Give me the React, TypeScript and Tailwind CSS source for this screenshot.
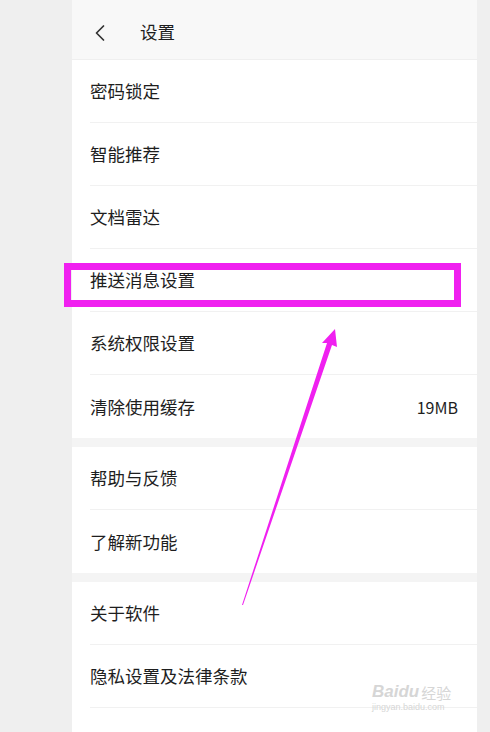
import { ChevronLeft } from "lucide-react";

type Row = { label: string; value?: string };

const groups: Row[][] = [
  [
    { label: "密码锁定" },
    { label: "智能推荐" },
    { label: "文档雷达" },
    { label: "推送消息设置" },
    { label: "系统权限设置" },
    { label: "清除使用缓存", value: "19MB" },
  ],
  [{ label: "帮助与反馈" }, { label: "了解新功能" }],
  [{ label: "关于软件" }, { label: "隐私设置及法律条款" }, { label: "" }],
];

const font = { fontFamily: '"Noto Sans CJK SC", "Noto Sans", sans-serif' };

const App = () => {
  return (
    <div className="relative w-[490px] h-[732px] overflow-hidden bg-[#efefef] flex items-start" style={font}>
      <div className="ml-[72px] w-[405px] flex flex-col bg-[#f4f4f4]">
        {/* header */}
        <div className="shrink-0 h-[60px] bg-[#f8f8f8] flex items-center pt-[6px] border-b border-[#efefef]">
          <ChevronLeft className="ml-[14px] w-[28px] h-[28px] text-[#333]" strokeWidth={1.5} />
          <span className="ml-[26px] text-[17.5px] text-[#1e1e1e]">设置</span>
        </div>

        {groups.map((g, gi) => (
          <div key={gi} className={gi > 0 ? "shrink-0 mt-[9px] bg-white" : "shrink-0 bg-white"}>
            {g.map((r, ri) => (
              <div key={ri} className="pl-[18px]">
                <div
                  className={
                    ri < g.length - 1
                      ? "h-[63px] flex items-center justify-between pr-[19px] pt-[1px] border-b border-[#f1f1f1]"
                      : "h-[63px] flex items-center justify-between pr-[19px] pt-[1px]"
                  }
                >
                  <span className="text-[17.5px] text-[#1e1e1e]">{r.label}</span>
                  {r.value && <span className="text-[16px] text-[#1e1e1e]">{r.value}</span>}
                </div>
              </div>
            ))}
          </div>
        ))}
      </div>

      {/* annotation box */}
      <div className="absolute left-[64px] top-[263px] w-[397px] h-[44px] border-[7px] border-[#f020f0]" />

      {/* annotation arrow */}
      <svg className="absolute left-0 top-0" width="490" height="732" viewBox="0 0 490 732">
        <polygon
          points="335,329 337,347 332,345 243,605 242,605 327,343 322,343"
          fill="#f020f0"
        />
      </svg>

      {/* watermark */}
      <div className="absolute left-[372px] top-[683px] flex flex-col items-start text-[#d6d6d6]">
        <div className="flex items-end gap-[2px]">
          <span className="text-[17px] font-bold italic leading-none" style={{ fontFamily: '"Liberation Sans", sans-serif' }}>
            Baidu
          </span>
          <span className="text-[15px] leading-none">经验</span>
        </div>
        <span className="text-[9px] leading-none mt-[3px]" style={{ fontFamily: '"Liberation Sans", sans-serif' }}>
          jingyan.baidu.com
        </span>
      </div>
    </div>
  );
};

export default App;
